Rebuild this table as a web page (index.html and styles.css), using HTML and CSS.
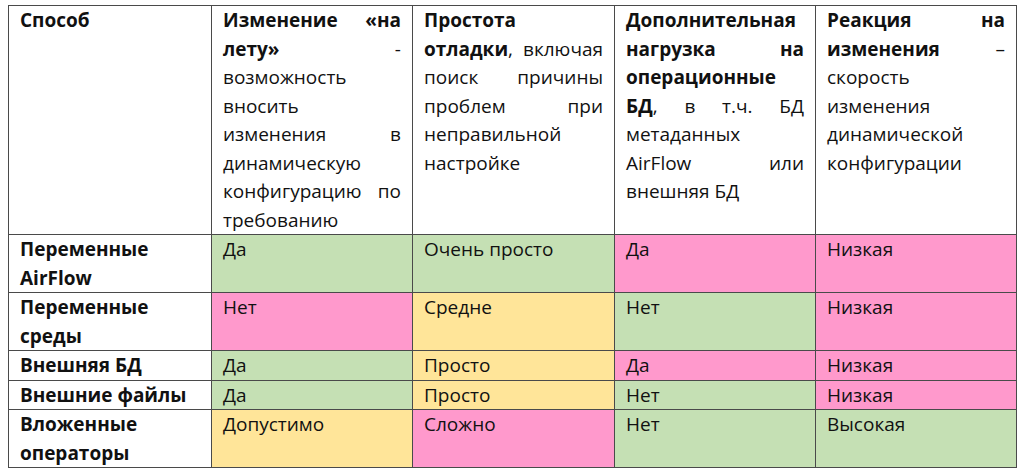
FILE: index.html
```html
<!DOCTYPE html>
<html lang="ru">
<head>
<meta charset="utf-8">
<link rel="stylesheet" href="styles.css">
</head>
<body>
<table class="cmp">
  <colgroup>
    <col class="c1"><col class="c2"><col class="c3"><col class="c4"><col class="c5"><col class="c6">
  </colgroup>
  <tr class="head">
    <td><b>Способ</b></td>
    <td class="just"><b>Изменение «на лету»</b> - возможность вносить изменения в динамическую конфигурацию по требованию</td>
    <td class="just"><b>Простота отладки</b>, включая поиск причины проблем при неправильной настройке</td>
    <td class="just"><b>Дополнительная нагрузка на операционные БД</b>, в т.ч. БД метаданных AirFlow или внешняя БД</td>
    <td class="just"><b>Реакция на изменения</b> – скорость изменения динамической конфигурации</td>
  </tr>
  <tr class="r2">
    <td><b>Переменные AirFlow</b></td>
    <td class="g">Да</td>
    <td class="g">Очень просто</td>
    <td class="p">Да</td>
    <td class="p">Низкая</td>
  </tr>
  <tr class="r2">
    <td><b>Переменные среды</b></td>
    <td class="p">Нет</td>
    <td class="y">Средне</td>
    <td class="g">Нет</td>
    <td class="p">Низкая</td>
  </tr>
  <tr class="r1">
    <td><b>Внешняя БД</b></td>
    <td class="g">Да</td>
    <td class="y">Просто</td>
    <td class="p">Да</td>
    <td class="p">Низкая</td>
  </tr>
  <tr class="r1">
    <td><b>Внешние файлы</b></td>
    <td class="g">Да</td>
    <td class="y">Просто</td>
    <td class="g">Нет</td>
    <td class="p">Низкая</td>
  </tr>
  <tr class="r2">
    <td><b>Вложенные операторы</b></td>
    <td class="y">Допустимо</td>
    <td class="p">Сложно</td>
    <td class="g">Нет</td>
    <td class="g">Высокая</td>
  </tr>
</table>
</body>
</html>
```
FILE: styles.css
```css
html, body {
  margin: 0;
  background: #ffffff;
}
body {
  padding: 5px 8px;
  font-family: "Open Sans", "Noto Sans", sans-serif;
  font-size: 19px;
  color: #111;
}
.cmp {
  border-collapse: collapse;
  table-layout: fixed;
  width: 1009px;
}
.cmp td {
  border: 1px solid #4a4a4a;
  padding: 0 11px;
  vertical-align: top;
  line-height: 28.5px;
  text-align: left;
}
.cmp td.just {
  text-align: justify;
}
.c1 { width: 203px; }
.c2 { width: 201px; }
.c3 { width: 202px; }
.c4 { width: 201px; }
.c5 { width: 201px; }
.head td { height: 227px; }
.r2 td { height: 57px; }
.r1 td { height: 28px; }
.g { background: #c5e0b4; }
.p { background: #ff99cc; }
.y { background: #ffe599; }
b { font-weight: 700; }
```
